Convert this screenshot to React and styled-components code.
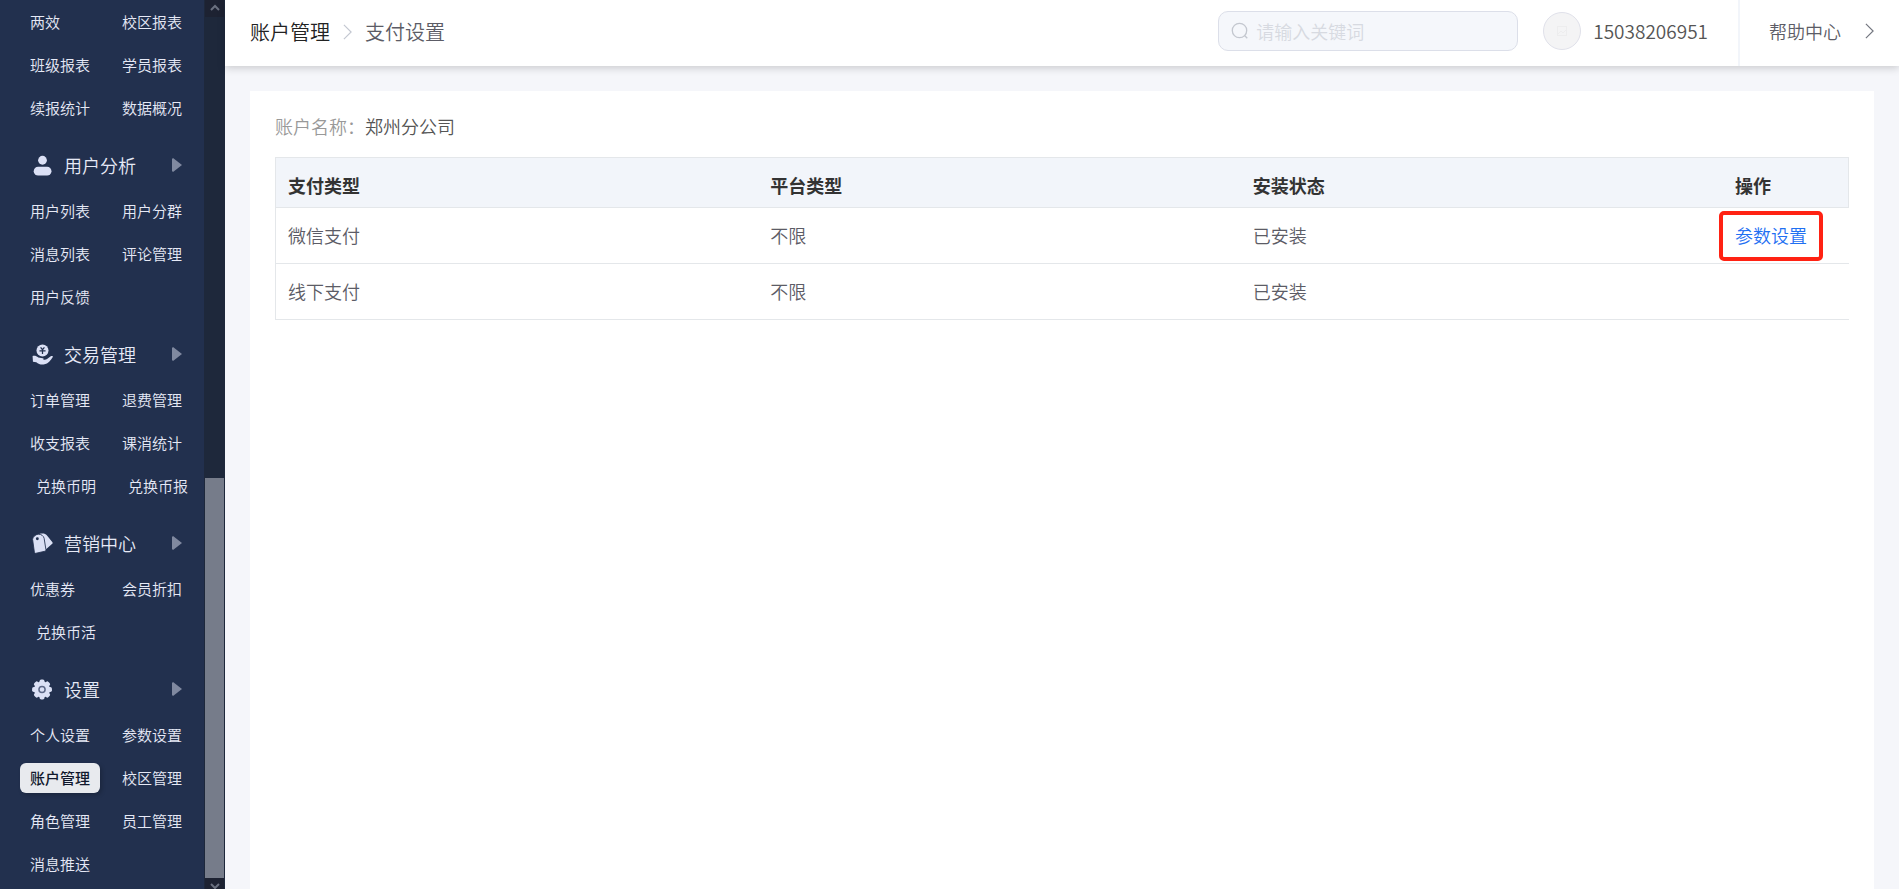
import React from 'react';
import styled, { createGlobalStyle, css } from 'styled-components';

const menus = [
  {
    rows: ['两效', '校区报表', '班级报表', '学员报表', '续报统计', '数据概况'],
  },
  {
    title: '用户分析',
    icon: 'user',
    rows: ['用户列表', '用户分群', '消息列表', '评论管理', '用户反馈'],
  },
  {
    title: '交易管理',
    icon: 'trade',
    rows: ['订单管理', '退费管理', '收支报表', '课消统计', '兑换币明', '兑换币报'],
  },
  {
    title: '营销中心',
    icon: 'tag',
    rows: ['优惠券', '会员折扣', '兑换币活'],
  },
  {
    title: '设置',
    icon: 'gear',
    rows: ['个人设置', '参数设置', '账户管理', '校区管理', '角色管理', '员工管理', '消息推送'],
  },
];

const payments = [
  { type: '微信支付', platform: '不限', status: '已安装', action: '参数设置' },
  { type: '线下支付', platform: '不限', status: '已安装' },
];

const current = '账户管理';

function MenuIcon({ name }) {
  switch (name) {
    case 'user':
      return (
        <Icon viewBox="0 0 22 22">
          <circle cx="11" cy="5.5" r="4.6" />
          <rect x="1.8" y="12.3" width="18.6" height="9.2" rx="4.6" />
        </Icon>
      );
    case 'trade':
      return (
        <Icon viewBox="0 0 22 22">
          <circle cx="11" cy="6.8" r="6.3" />
          <path d="M9 3.6l2 2.400 2-2.400M11 6v4.600M7.800 7.200h6.400" fill="none" stroke="#22304e" strokeWidth="1.3" />
          <path d="M.6 12.600c2-.5 4.200-.1 6 1.500l4.600.9c1.300.3 1.300 1.300.2 1.500 2.200.2 3.900-.6 5.400-1.700l3.200-2.100c1.300-.5 2.300-.1 1.800.9-2.200 3.800-5 6.900-8.700 7.700-3.700.7-6.300-.5-8.600-2.300L1 18.500z" />
        </Icon>
      );
    case 'tag':
      return (
        <Icon viewBox="0 0 22 22">
          <path d="M8 .9c3.500-.7 6-.4 7.500 1.500l5.700 6.900c.6.700.6 1.300 0 1.900L13.500 18z" />
          <path
            d="M.6 6.500C.9 4.200 3.400 1.600 6.500 1.200c3.200-.1 5.500 1.800 6.200 4.300l1.900 12c.1.900-.3 1.400-1 1.600L4.200 21.200c-.9.200-1.500-.2-1.700-1z"
            stroke="#22304e"
            strokeWidth=".9"
          />
          <circle cx="5.600" cy="6" r="1.500" fill="#22304e" />
        </Icon>
      );
    default:
      return (
        <Icon viewBox="0 0 22 22">
          {[0, 45, 90, 135].map(a => (
            <rect key={a} x="7.900" y=".6" width="5.200" height="20.800" rx="1.800" transform={`rotate(${a} 10.500 11)`} />
          ))}
          <circle cx="10.500" cy="11" r="8.400" />
          <circle cx="10.500" cy="11" r="3.200" fill="none" stroke="#5d6887" strokeWidth="1.600" />
        </Icon>
      );
  }
}

function Sidebar() {
  return (
    <Side>
      <Nav>
        {menus.map((menu, i) => (
          <section key={i}>
            {menu.title && (
              <MenuTitle type="button">
                <MenuIcon name={menu.icon} />
                <span>{menu.title}</span>
                <Caret viewBox="0 0 10 14"><path d="M1 0l9 7-9 7-1-1V1z" /></Caret>
              </MenuTitle>
            )}
            <MenuGrid>
              {menu.rows.map(name => (
                <MenuLink
                  key={name}
                  href="#"
                  $active={name === current}
                  $indent={name.startsWith('兑换币')}
                >
                  {name}
                </MenuLink>
              ))}
            </MenuGrid>
          </section>
        ))}
      </Nav>
      <ScrollBar>
        <ScrollEnd $height={17}>
          <svg width="10" height="8" viewBox="0 0 10 8"><path d="M1 6l4-4 4 4" /></svg>
        </ScrollEnd>
        <ScrollTrack />
        <ScrollThumb />
        <ScrollEnd $height={11}>
          <svg width="10" height="8" viewBox="0 0 10 8"><path d="M1 2l4 4 4-4" /></svg>
        </ScrollEnd>
      </ScrollBar>
    </Side>
  );
}

function TopBar() {
  return (
    <Header>
      <Crumbs>
        <Crumb href="#">账户管理</Crumb>
        <Chevron viewBox="0 0 10 18" $color="#c3c7d1"><path d="M1 1l8 8-8 8" /></Chevron>
        <span>支付设置</span>
      </Crumbs>
      <Search>
        <svg width="18" height="18" viewBox="0 0 18 18">
          <circle cx="8.500" cy="8.500" r="7.200" />
          <path d="M13.500 13.500l2.800 2.800" />
        </svg>
        <SearchInput type="text" aria-label="搜索" placeholder="请输入关键词" />
      </Search>
      <Account>
        <Avatar>
          <svg width="10" height="10" viewBox="0 0 10 10">
            <rect x=".5" y=".5" width="9" height="9" />
            <path d="M1 8l3-3 2 2 3-3" />
          </svg>
        </Avatar>
        <span>15038206951</span>
      </Account>
      <Help href="#">
        帮助中心
        <Chevron viewBox="0 0 10 18" $color="#73767f"><path d="M1 1l8 8-8 8" /></Chevron>
      </Help>
    </Header>
  );
}

function App() {
  return (
    <Page>
      <GlobalStyle />
      <Sidebar />
      <Main>
        <TopBar />
        <Card>
          <AccountName>
            <span>账户名称：</span>郑州分公司
          </AccountName>
          <Table>
            <thead>
              <tr>
                <th>支付类型</th>
                <th>平台类型</th>
                <th>安装状态</th>
                <ActionHead>操作</ActionHead>
              </tr>
            </thead>
            <tbody>
              {payments.map(item => (
                <tr key={item.type}>
                  <td>{item.type}</td>
                  <td>{item.platform}</td>
                  <td>{item.status}</td>
                  <td>{item.action && <ActionLink href="#">{item.action}</ActionLink>}</td>
                </tr>
              ))}
            </tbody>
          </Table>
        </Card>
      </Main>
    </Page>
  );
}
export default App;

const GlobalStyle = createGlobalStyle`
  * {
    box-sizing: border-box;
  }
  body {
    margin: 0;
    background: #f5f6fa;
    color: #5c5c66;
    font-family: 'Noto Sans CJK SC', sans-serif;
    font-size: 18px;
    font-weight: 350;
    line-height: 26px;
  }
  a {
    color: inherit;
    text-decoration: none;
  }
  button, input {
    font: inherit;
  }
`;

const Page = styled.div`
  display: flex;
  height: 100vh;
  overflow: hidden;
`;

/* sidebar */
const Side = styled.aside`
  display: flex;
  flex: none;
  width: 225px;
  background: #22304e;
  color: #e6e9f6;
`;
const Nav = styled.nav`
  flex: 1;
  overflow: hidden;
`;
const MenuTitle = styled.button`
  display: flex;
  align-items: center;
  gap: 11px;
  width: 100%;
  height: 46px;
  margin-top: 14px;
  padding: 0 22px 2px 32px;
  border: none;
  background: none;
  color: inherit;
  text-align: left;
  span {
    flex: 1;
  }
`;
const Icon = styled.svg`
  width: 21px;
  height: 21px;
  fill: #dbe0f5;
`;
const Caret = styled.svg`
  width: 10px;
  height: 14px;
  fill: #8089a0;
`;
const MenuGrid = styled.div`
  display: grid;
  grid-template-columns: 80px 80px;
  grid-auto-rows: 43px;
  column-gap: 12px;
  align-items: center;
  padding-left: 20px;
`;
const MenuLink = styled.a`
  height: 30px;
  padding-left: ${props => (props.$indent ? '16px' : '10px')};
  font-size: 15px;
  line-height: 30px;
  white-space: nowrap;
  ${props => props.$active && css`
    border-radius: 6px;
    background: #e8eaee;
    box-shadow: 2px 2px 4px rgba(0, 0, 0, 0.2);
    color: #10182c;
    font-weight: 500;
  `}
`;
const ScrollBar = styled.div`
  display: flex;
  flex-direction: column;
  width: 21px;
  padding: 0 1px;
  background: #1e283b;
`;
const ScrollEnd = styled.div`
  display: flex;
  flex: none;
  justify-content: center;
  height: ${props => props.$height}px;
  padding-top: 4px;
  background: #1d2232;
  overflow: hidden;
  svg {
    flex: none;
    fill: none;
    stroke: #6b7180;
    stroke-width: 2;
  }
`;
const ScrollTrack = styled.div`
  flex: 461;
`;
const ScrollThumb = styled.div`
  flex: 400;
  background: #767c8a;
`;

/* top bar */
const Main = styled.main`
  display: flex;
  flex: 1;
  flex-direction: column;
  min-width: 0;
`;
const Header = styled.header`
  display: flex;
  flex: none;
  align-items: center;
  height: 66px;
  padding: 0 25px;
  background: #fff;
  box-shadow: 0 2px 8px rgba(0, 0, 0, 0.18);
`;
const Crumbs = styled.div`
  display: flex;
  flex: 1;
  align-items: center;
  gap: 13px;
  padding-bottom: 2px;
  font-size: 20px;
`;
const Crumb = styled.a`
  color: #222;
`;
const Chevron = styled.svg`
  width: 9px;
  height: 18px;
  fill: none;
  stroke: ${props => props.$color};
  stroke-width: 1.3;
`;
const Search = styled.label`
  display: flex;
  align-items: center;
  gap: 7px;
  width: 300px;
  height: 40px;
  margin-bottom: 4px;
  padding: 0 12px;
  border: 1px solid #dcdfe9;
  border-radius: 10px;
  background: #f5f7fb;
  svg {
    flex: none;
    fill: none;
    stroke: #c3c7cf;
    stroke-width: 1.3;
  }
`;
const SearchInput = styled.input`
  flex: 1;
  min-width: 0;
  padding: 0;
  border: none;
  outline: none;
  background: none;
  color: #666;
  &::placeholder {
    color: #d7dae1;
  }
`;
const Account = styled.div`
  display: flex;
  align-items: center;
  gap: 12px;
  margin: 0 30px 4px 25px;
  color: #555;
  font-size: 19px;
`;
const Avatar = styled.div`
  display: flex;
  align-items: center;
  justify-content: center;
  width: 38px;
  height: 38px;
  border: 1px solid #e0e1ea;
  border-radius: 50%;
  background: #f4f4f5;
  svg {
    fill: none;
    stroke: #ededee;
  }
`;
const Help = styled.a`
  display: flex;
  align-items: center;
  gap: 24px;
  height: 100%;
  padding: 0 0 4px 29px;
  border-left: 2px solid #f2f5fa;
`;

/* content */
const Card = styled.section`
  flex: 1;
  margin: 25px 25px 0;
  padding: 22px 25px;
  background: #fff;
`;
const AccountName = styled.div`
  margin-bottom: 18px;
  color: #555;
  span {
    color: #999;
  }
`;
const Table = styled.table`
  width: 100%;
  border-collapse: separate;
  border-spacing: 0;
  border-left: 1px solid #e4e7ea;
  table-layout: fixed;
  text-align: left;
  th {
    height: 51px;
    padding: 4px 12px 0;
    border-top: 1px solid #e4e7ea;
    border-bottom: 1px solid #e4e7ea;
    background: #f2f5fa;
    color: #333;
    font-weight: 700;
  }
  td {
    height: 56px;
    padding: 0 12px 2px;
    border-bottom: 1px solid #e4e7ea;
  }
`;
const ActionHead = styled.th`
  width: 126px;
  border-right: 1px solid #e4e7ea;
`;
const ActionLink = styled.a`
  position: relative;
  display: inline-block;
  color: #1f70f2;
  white-space: nowrap;
  /* red marker round the link */
  &::after {
    content: '';
    position: absolute;
    inset: -11px -16px -13px;
    border: 4px solid #ff2213;
    border-radius: 5px;
  }
`;
